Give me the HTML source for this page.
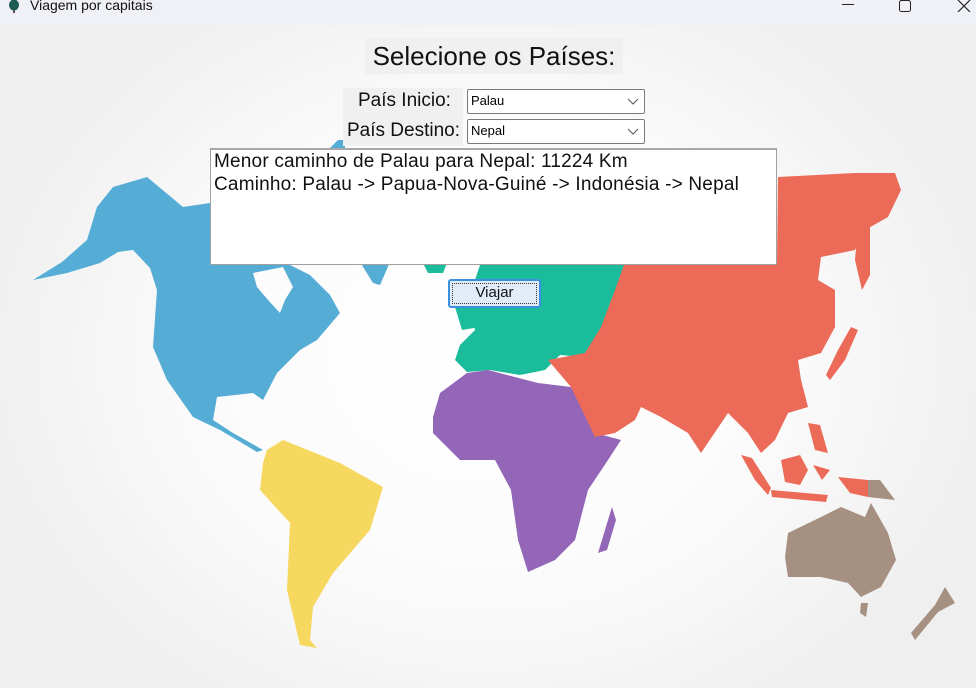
<!DOCTYPE html>
<html><head><meta charset="utf-8"><style>
*{margin:0;padding:0;box-sizing:border-box}
body{width:976px;height:688px;overflow:hidden;position:relative;font-family:"Liberation Sans",Arial,sans-serif;background:#f0f0f0}
#tb{position:absolute;left:0;top:0;width:976px;height:25px;background:#eff1f7}
#tb .t{position:absolute;left:30px;top:-3px;font-size:14px;color:#111}
#bg{position:absolute;left:0;top:25px;width:976px;height:663px;background:radial-gradient(ellipse 520px 420px at 488px 330px,#ffffff 0%,#fbfbfb 55%,#efefef 100%)}
svg.map{position:absolute;left:0;top:0}
.lbl{position:absolute;background:#f0f0f0;color:#111;white-space:nowrap}
.cb{position:absolute;left:467px;width:178px;height:25px;background:#fff;border:1px solid #7a7a7a;border-radius:2px;font-size:13px;padding:3px 0 0 3px;color:#000}
.cb svg{position:absolute;right:5px;top:8px}
#txt{position:absolute;left:210px;top:148px;width:567px;height:117px;background:#fff;border:1px solid #a0a0a0;border-top:2px solid #a8a8a8;font-size:19px;letter-spacing:0.2px;line-height:23px;padding:0 0 0 3px;color:#111;white-space:nowrap}
#btn{position:absolute;left:448px;top:279px;width:93px;height:29px;border:2px solid #3c8fe0;border-radius:3px;background:#e1ecf8;font-size:15px;text-align:center;line-height:24px;color:#111}
#btn:after{content:"";position:absolute;left:2px;top:2px;right:2px;bottom:2px;border:1px dotted #333}
</style></head><body>
<div id="tb"><svg style="position:absolute;left:8px;top:0" width="12" height="14"><ellipse cx="6" cy="5" rx="5" ry="5.5" fill="#1e5b55"/><rect x="5" y="10" width="2" height="3" fill="#555"/></svg><span class="t">Viagem por capitais</span>
<svg style="position:absolute;left:842px;top:4px" width="12" height="2"><rect width="12" height="1" fill="#222"/></svg>
<svg style="position:absolute;left:899px;top:0" width="12" height="12"><rect x="0.5" y="0.5" width="11" height="11" rx="2" fill="none" stroke="#222"/></svg>
<svg style="position:absolute;left:957px;top:0" width="14" height="12"><path d="M1 0L13 12M13 0L1 12" stroke="#222" stroke-width="1.2"/></svg></div>
<div id="bg"></div>
<svg class="map" width="976" height="688">
<g fill="#55acd5">
<path d="M33 280L67 273L100 263L118 252L133 250L150 268L157 290L153 347L167 380L193 417L220 430L257 452L263 450L233 433L213 420L217 397L253 393L263 400L277 373L300 350L317 340L340 313L330 295L310 275L290 265L253 262L240 200L210 203L183 207L147 177L113 187L97 207L87 240L62 262Z"/>
<path d="M360 262L390 262L380 285L373 283Z"/>
<path d="M330 148L338 140L345 140L345 148Z"/>
</g>
<path d="M253 273L283 267L293 287L285 300L280 313L268 300L257 287Z" fill="#fcfcfc"/>
<path d="M267 450L283 440L340 463L383 487L370 530L333 573L313 607L310 640L317 648L300 645L287 590L290 523L260 490L263 463Z" fill="#f6d75f"/>
<g fill="#1abc9c">
<path d="M480 265L625 265L620 290L606 320L600 347L585 357L560 355L545 370L520 375L490 370L467 372L455 360L460 345L475 330L470 310L490 295L475 280Z"/>
<path d="M423 263L447 263L443 273L428 273Z"/>
<path d="M455 307L476 305L480 327L462 330Z"/>
</g>
<g fill="#9366b8">
<path d="M433 417L440 393L467 373L488 370L538 383L571 387L595 433L621 440L608 460L588 490L575 540L555 560L528 572L518 540L511 490L495 460L460 460L433 433Z"/>
<path d="M598 553L612 507L616 520L607 550Z"/>
</g>
<g fill="#ec6a58">
<path d="M625 262L777 262L778 177L855 173L895 173L901 190L888 217L865 230L861 237L855 250L821 257L818 280L835 290L835 327L821 353L798 360L801 380L808 407L788 413L775 440L761 453L748 433L728 413L701 453L688 433L661 417L641 407L635 420L615 433L595 437L571 387L548 360L585 353L601 327L615 290Z"/>
<path d="M858 225L870 222L870 275L862 290L855 260Z"/>
<path d="M851 327L858 330L845 360L830 380L826 375L838 350Z"/>
<path d="M741 455L752 458L771 488L768 495L755 480Z"/>
<path d="M781 460L800 455L808 470L800 485L785 482Z"/>
<path d="M771 490L828 495L826 502L772 497Z"/>
<path d="M838 477L868 480L868 497L850 493Z"/>
<path d="M808 423L820 425L828 453L815 450Z"/>
<path d="M813 465L830 470L822 480Z"/>
</g>
<g fill="#a59081">
<path d="M788 533L821 517L841 507L865 517L871 503L888 533L896 560L881 587L861 597L848 583L821 577L788 577L785 557Z"/>
<path d="M861 603L868 603L866 617L860 613Z"/>
<path d="M868 480L880 480L895 500L868 497Z"/>
<path d="M945 587L955 603L938 612L915 640L911 633L935 605Z"/>
</g>
</svg>
<div class="lbl" style="left:365px;top:38px;width:258px;height:36px;font-size:26px;line-height:36px;text-align:center">Selecione os Países:</div>
<div class="lbl" style="left:343px;top:88px;width:120px;height:58px"></div>
<div class="lbl" style="left:358px;top:90px;font-size:19px;background:none">País Inicio:</div>
<div class="lbl" style="left:347px;top:120px;font-size:19px;background:none">País Destino:</div>
<div class="cb" style="top:89px">Palau<svg width="12" height="8"><path d="M1 1L6 6L11 1" fill="none" stroke="#555"/></svg></div>
<div class="cb" style="top:119px">Nepal<svg width="12" height="8"><path d="M1 1L6 6L11 1" fill="none" stroke="#555"/></svg></div>
<div id="txt">Menor caminho de Palau para Nepal: 11224 Km<br>Caminho: Palau -&gt; Papua-Nova-Guiné -&gt; Indonésia -&gt; Nepal</div>
<div id="btn">Viajar</div>
</body></html>
